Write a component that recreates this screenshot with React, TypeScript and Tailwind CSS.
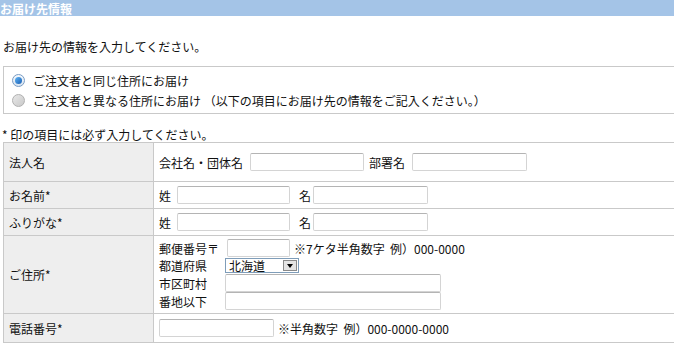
import React from "react";

const Field = ({ w, className = "" }: { w: string; className?: string }) => (
  <span
    className={`inline-block h-[18px] ${w} rounded-[2px] border border-[#d4d4d4] border-t-[#b4b4b4] bg-white ${className}`}
  />
);

const Radio = ({ checked }: { checked?: boolean }) =>
  checked ? (
    <span className="flex h-[13px] w-[13px] items-center justify-center rounded-full border border-[#7a9cc4] bg-gradient-to-b from-[#f4f8fc] to-[#d8e4f0]">
      <span className="h-[7px] w-[7px] rounded-full bg-gradient-to-br from-[#5fb4f5] to-[#1a5fb4]" />
    </span>
  ) : (
    <span className="h-[13px] w-[13px] rounded-full border border-[#b0b0b0] bg-gradient-to-br from-[#e8e8e8] to-[#c9c9c9]" />
  );

const Row = ({ label, h, children }: { label: string; h: string; children: React.ReactNode }) => (
  <div className={`flex ${h} border-b border-[#c9c9c9]`}>
    <div className="flex w-[150px] shrink-0 items-center border-r border-[#c9c9c9] bg-[#eeeeee] pl-[5px]">{label}</div>
    <div className="flex flex-1 items-center pl-[5px]">{children}</div>
  </div>
);

export default function App() {
  return (
    <div className="h-[349px] w-[674px] overflow-hidden bg-white text-[12px] leading-[15px] text-[#111] [font-family:'Noto_Sans_CJK_JP',sans-serif]">
      <div className="flex h-[16px] items-center bg-[#a4c4e7] font-bold text-white">
        <span>お届け先情報</span>
      </div>

      <p className="mt-[23px] pl-[3px]">お届け先の情報を入力してください。</p>

      <div className="ml-[3px] mt-[12px] flex h-[48px] w-[700px] flex-col justify-center gap-[5px] border border-[#c9c9c9] pl-[8px]">
        <label className="flex items-center gap-[8px]">
          <Radio checked />
          <span>ご注文者と同じ住所にお届け</span>
        </label>
        <label className="flex items-center gap-[8px]">
          <Radio />
          <span>ご注文者と異なる住所にお届け （以下の項目にお届け先の情報をご記入ください。）</span>
        </label>
      </div>

      <p className="mt-[13px] pl-[2px]">* 印の項目には必ず入力してください。</p>

      <div className="ml-[3px] w-[700px] border-t border-l border-[#c9c9c9]">
        <Row label="法人名" h="h-[39px]">
          <span>会社名・団体名</span>
          <Field w="w-[114px]" className="ml-[7px]" />
          <span className="ml-[5px]">部署名</span>
          <Field w="w-[115px]" className="ml-[7px]" />
        </Row>
        <Row label="お名前*" h="h-[27px]">
          <span>姓</span>
          <Field w="w-[113px]" className="ml-[6px]" />
          <span className="ml-[9px]">名</span>
          <Field w="w-[115px]" className="ml-[2px]" />
        </Row>
        <Row label="ふりがな*" h="h-[27px]">
          <span>姓</span>
          <Field w="w-[113px]" className="ml-[6px]" />
          <span className="ml-[9px]">名</span>
          <Field w="w-[115px]" className="ml-[2px]" />
        </Row>
        <div className="flex h-[78px] border-b border-[#c9c9c9]">
          <div className="flex w-[150px] shrink-0 items-center border-r border-[#c9c9c9] bg-[#eeeeee] pl-[5px]">ご住所*</div>
          <div className="flex flex-1 flex-col justify-center pl-[5px]">
            <div className="flex h-[18px] items-center">
              <span className="w-[68px]">郵便番号〒</span>
              <Field w="w-[63px]" />
              <span className="ml-[4px]">※7ケタ半角数字&nbsp;&nbsp;例）000-0000</span>
            </div>
            <div className="flex h-[17px] items-center">
              <span className="w-[66px]">都道府県</span>
              <span className="flex h-[15px] w-[74px] items-center border border-[#7f9db9] bg-white pl-[3px]">
                <span className="flex-1 leading-[13px]">北海道</span>
                <span className="mr-[1px] flex h-[11px] w-[14px] items-center justify-center border border-[#8a8a8a] bg-[#e4e4e4]">
                  <span className="h-0 w-0 border-x-[3px] border-t-[4px] border-x-transparent border-t-black" />
                </span>
              </span>
            </div>
            <div className="flex h-[18px] items-center">
              <span className="w-[66px]">市区町村</span>
              <Field w="w-[216px]" />
            </div>
            <div className="flex h-[18px] items-center">
              <span className="w-[66px]">番地以下</span>
              <Field w="w-[216px]" />
            </div>
          </div>
        </div>
        <Row label="電話番号*" h="h-[29px]">
          <Field w="w-[115px]" />
          <span className="ml-[4px]">※半角数字&nbsp;&nbsp;例）000-0000-0000</span>
        </Row>
      </div>
    </div>
  );
}
